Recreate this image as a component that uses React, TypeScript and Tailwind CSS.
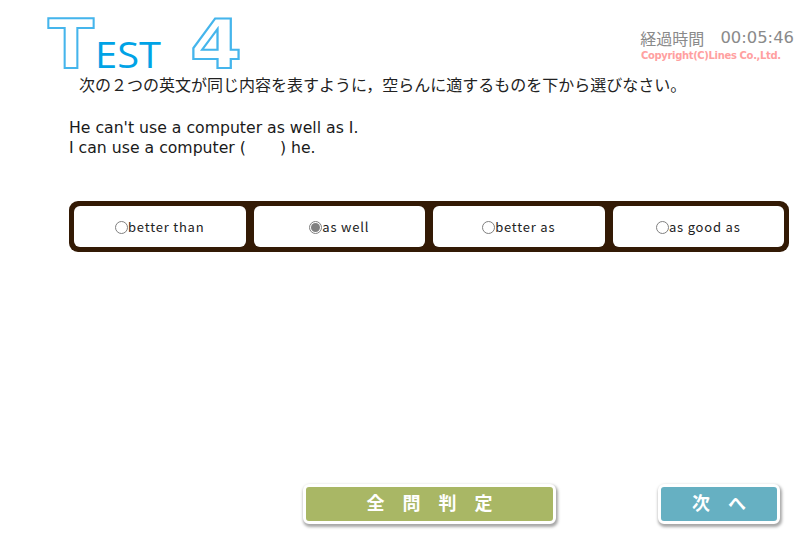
const choices = [
  { label: "better than", checked: false },
  { label: "as well", checked: true },
  { label: "better as", checked: false },
  { label: "as good as", checked: false },
];

const jp = "font-['Noto_Sans_CJK_JP','DejaVu_Sans',sans-serif]";

function Logo() {
  return (
    <svg width="200" height="56" viewBox="0 0 200 56" className="block overflow-visible">
      <text x="1" y="52" fontFamily="DejaVu Sans, sans-serif" fontSize="67" fontWeight="700" fill="#fff" stroke="#45b5ec" strokeWidth="2" textLength="46" lengthAdjust="spacingAndGlyphs">T</text>
      <text x="48" y="52" fontFamily="Open Sans, sans-serif" fontSize="36" fill="#00a3e6" textLength="66" lengthAdjust="spacingAndGlyphs">EST</text>
      <text x="143" y="52" fontFamily="DejaVu Sans, sans-serif" fontSize="67" fontWeight="700" fill="#fff" stroke="#45b5ec" strokeWidth="2" textLength="52" lengthAdjust="spacingAndGlyphs">4</text>
    </svg>
  );
}

export default function App() {
  return (
    <div className={`w-[801px] h-[545px] bg-white overflow-hidden ${jp}`}>
      {/* Header */}
      <header className="flex justify-between h-[72px] pl-[47px] pr-[7px] pt-[16px]">
        <Logo />
        <div className="flex flex-col items-end pt-[11px]">
          <div className="flex items-center gap-[16px] text-[16px] leading-[22px] text-[#8a8a8a]">
            <span>経過時間</span>
            <span className="font-['DejaVu_Sans',sans-serif] text-[16.4px]">00:05:46</span>
          </div>
          <div className="w-[153px] font-['DejaVu_Sans',sans-serif] font-bold text-[10px] tracking-[-0.35px] leading-[13px] text-[#ffa0a0] whitespace-nowrap">
            Copyright(C)Lines Co.,Ltd.
          </div>
        </div>
      </header>

      {/* Question */}
      <main className="pl-[69px] pr-[12px]">
        <p className="pl-[10px] text-[16px] leading-[25px] text-[#222]">
          次の２つの英文が同じ内容を表すように，空らんに適するものを下から選びなさい。
        </p>
        <div className="mt-[21px] text-[15.7px] leading-[20px] text-[#1a1a1a] font-['DejaVu_Sans',sans-serif]">
          <p>He can't use a computer as well as I.</p>
          <p className="whitespace-pre">I can use a computer (<span className="inline-block w-[34px]" />) he.</p>
        </div>

        {/* Choices */}
        <div className="mt-[43px] h-[51px] p-[5px] flex gap-[8px] rounded-[9px] bg-[#331a05]">
          {choices.map((c) => (
            <div key={c.label} className="flex-1 flex items-center justify-center rounded-[6px] bg-white text-[13px] text-[#222] tracking-[0.8px]">
              <span className="w-[13px] h-[13px] mt-[2px] rounded-full border border-[#808080] bg-white flex items-center justify-center">
                {c.checked && <span className="w-[9px] h-[9px] rounded-full bg-[#808080]" />}
              </span>
              {c.label}
            </div>
          ))}
        </div>
      </main>

      {/* Buttons */}
      <footer className="flex mt-[232px] pl-[303px]">
        <button className="w-[253px] h-[40px] rounded-[6px] bg-[#a9b765] border-[3px] border-white shadow-[1px_2px_3px_1px_rgba(0,0,0,0.35)] text-white font-bold text-[18px] tracking-[1em] pl-[1em] pb-[3px]">
          全問判定
        </button>
        <button className="ml-[102px] w-[122px] h-[40px] rounded-[6px] bg-[#66b0c2] border-[3px] border-white shadow-[1px_2px_3px_1px_rgba(0,0,0,0.35)] text-white font-bold text-[18px] tracking-[1em] pl-[1em] pb-[3px]">
          次へ
        </button>
      </footer>
    </div>
  );
}
